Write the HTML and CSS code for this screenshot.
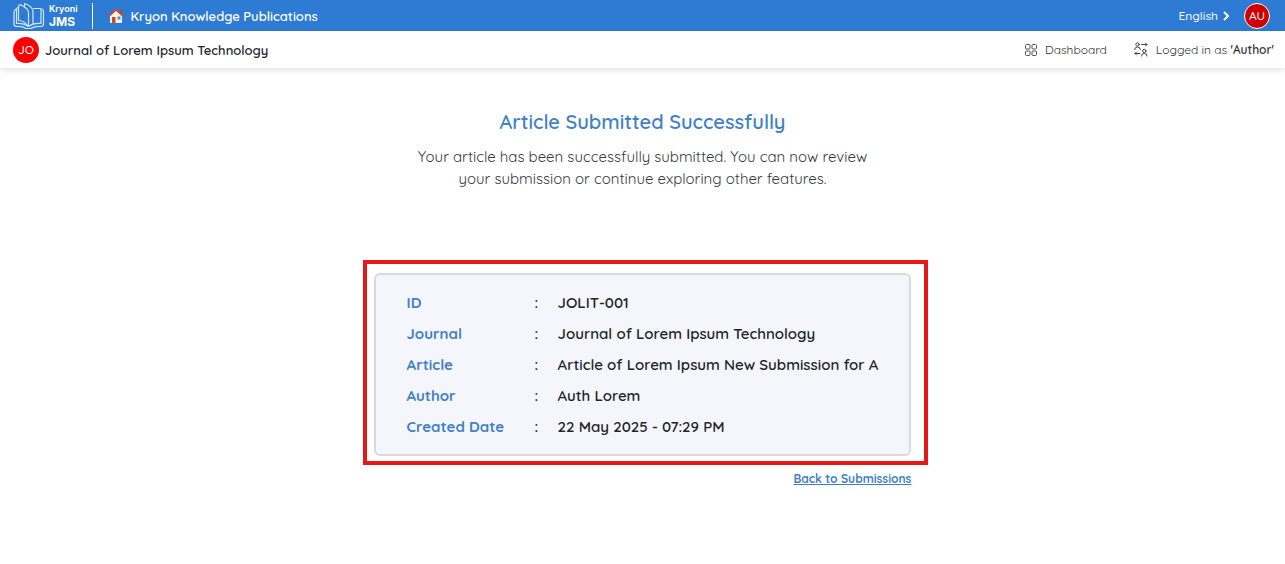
FILE: index.html
```html
<!DOCTYPE html>
<html lang="en">
<head>
<meta charset="utf-8">
<meta name="viewport" content="width=device-width, initial-scale=1">
<title>Article Submitted Successfully</title>
<link rel="stylesheet" href="styles.css">
</head>
<body>
<header>
  <div class="topbar">
    <a class="logo" href="#">
      <svg class="logo-mark" viewBox="0 0 32 28" fill="none" stroke="#d5e5f8" stroke-width="1.2" stroke-linejoin="round" stroke-linecap="round" aria-hidden="true">
        <path d="M3 7Q1 8 1 11V22.500Q1 24.500 4 24.500Q9 24 13 26.500H18Q22 24 27.500 24.500Q30.500 24.500 30.500 22V10Q30.500 7.500 29 7"/>
        <path d="M5.500 5Q3.500 5.500 3.500 8V21.500Q10 20.500 15.500 24.500Q21 20.500 28 21.500V6.500H20.500"/>
        <path d="M7 2.500Q5.500 3 5.500 5V18.500Q11 18.500 15.500 24.500V10.500Q15 7 11.500 5Z"/>
        <path d="M11.500 5V1.500Q19 4 20 9V21.500"/>
      </svg>
      <span class="logo-text"><span class="logo-name">Kryoni</span><span class="logo-product">JMS</span></span>
    </a>
    <a class="publisher" href="#">
      <svg class="home" viewBox="0 0 16 16" aria-hidden="true">
        <path d="M11.500 1.500H13.500V6H11.500Z" fill="#c43e1c"/>
        <path d="M2 8 8 2.500 14 8V15H2Z" fill="#f5f5f5"/>
        <path d="M4 9H7.500V15H4Z" fill="#d9480f"/>
        <path d="M9.500 8.500H12.500V11.500H9.500Z" fill="#3a9be8"/>
        <path d="M1 8.200 8 1.800 15 8.200" fill="none" stroke="#dc4a1b" stroke-width="1.6" stroke-linecap="round" stroke-linejoin="round"/>
      </svg>
      Kryon Knowledge Publications
    </a>
    <div class="account">
      <button class="language" type="button">English
        <svg class="chevron" viewBox="0 0 6 10" fill="none" stroke="currentColor" stroke-width="2" aria-hidden="true"><path d="M1 1 5 5 1 9"/></svg>
      </button>
      <button class="avatar avatar-user" type="button">AU</button>
    </div>
  </div>
  <nav class="subbar">
    <a class="journal" href="#"><span class="avatar avatar-journal">JO</span>Journal of Lorem Ipsum Technology</a>
    <div class="links">
      <a class="link" href="#">
        <svg class="icon-grid" viewBox="0 0 12 12" fill="none" stroke="#555" aria-hidden="true">
          <rect x=".5" y=".5" width="4.500" height="4.500" rx="1"/><rect x="7" y=".5" width="4.500" height="4.500" rx="1"/>
          <rect x=".5" y="7" width="4.500" height="4.500" rx="1"/><rect x="7" y="7" width="4.500" height="4.500" rx="1"/>
        </svg>
        Dashboard
      </a>
      <a class="link" href="#">
        <svg class="icon-role" viewBox="0 0 14 15" fill="none" stroke="#444" stroke-linecap="round" stroke-linejoin="round" aria-hidden="true">
          <circle cx="3.500" cy="2.500" r="1.700"/><path d="M.7 7.500Q.7 5 3.500 5T6.300 7.500"/>
          <circle cx="10.300" cy="9" r="1.700"/><path d="M7.500 14Q7.500 11.500 10.300 11.500T13.100 14"/>
          <path d="M7.500 2.500H13M11.500 1 13 2.500 11.500 4M6 11.500H1M2.500 10 1 11.500 2.500 13"/>
        </svg>
        <span>Logged in as <strong>'Author'</strong></span>
      </a>
    </div>
  </nav>
</header>
<main class="content">
  <h1 class="title">Article Submitted Successfully</h1>
  <p class="message">Your article has been successfully submitted. You can now review<br>your submission or continue exploring other features.</p>
  <div class="result">
    <section class="frame">
      <div class="card">
        <table class="details">
          <tr><th scope="row">ID</th><td class="colon">:</td><td>JOLIT-001</td></tr>
          <tr><th scope="row">Journal</th><td class="colon">:</td><td>Journal of Lorem Ipsum Technology</td></tr>
          <tr><th scope="row">Article</th><td class="colon">:</td><td>Article of Lorem Ipsum New Submission for A</td></tr>
          <tr><th scope="row">Author</th><td class="colon">:</td><td>Auth Lorem</td></tr>
          <tr><th scope="row">Created Date</th><td class="colon">:</td><td>22 May 2025 - 07:29 PM</td></tr>
        </table>
      </div>
    </section>
    <a class="back" href="#">Back to Submissions</a>
  </div>
</main>
</body>
</html>
```
FILE: styles.css
```css
* { box-sizing: border-box; }
body {
  margin: 0;
  background: #fff;
  color: #212529;
  font-family: Quicksand, Inter, sans-serif;
  font-size: 15px;
}
a { color: inherit; text-decoration: none; }
button { border: 0; padding: 0; background: none; color: inherit; font: inherit; cursor: pointer; }
svg { display: block; flex: none; }

.topbar {
  display: flex;
  align-items: center;
  height: 31px;
  padding: 0 15px 0 13px;
  background: #2e7bd3;
  color: #fff;
}
.logo { display: flex; align-items: center; gap: 4px; padding-right: 14px; border-right: 1px solid #fff; height: 26px; }
.logo-mark { width: 32px; height: 28px; }
.logo-text { display: flex; flex-direction: column; font-family: Inter, sans-serif; font-weight: 700; }
.logo-name { font-size: 9px; line-height: 11px; font-weight: 600; }
.logo-product { font-size: 12px; line-height: 15px; }
.publisher { display: flex; align-items: center; gap: 7px; margin-left: 15px; font-size: 13px; line-height: 16px; font-weight: 600; }
.home { width: 16px; height: 16px; }
.account { display: flex; align-items: center; gap: 15px; margin-left: auto; }
.language { display: flex; align-items: center; gap: 5px; font-size: 12px; font-weight: 500; }
.chevron { width: 6px; height: 10px; }
.avatar { display: flex; align-items: center; justify-content: center; width: 26px; height: 26px; border-radius: 50%; color: #fff; font-size: 12px; font-weight: 500; }
.avatar-user { background: #d00000; border: 1px solid #fff; }
.avatar-journal { background: #f00; }

.subbar {
  display: flex;
  align-items: center;
  justify-content: space-between;
  height: 37px;
  padding: 0 11px 0 13px;
  background: #fff;
  box-shadow: 0 2px 6px rgba(0, 0, 0, .12);
}
.journal { display: flex; align-items: center; gap: 6px; font-size: 13px; font-weight: 600; }
.links { display: flex; gap: 27px; }
.link { display: flex; align-items: center; gap: 8px; font-size: 12px; color: #333; }
.link strong { font-weight: 600; }
.icon-grid { width: 12px; height: 12px; }
.icon-role { width: 14px; height: 15px; }

.content { display: flex; flex-direction: column; align-items: center; padding: 40px 16px; }
.title { margin: 0; color: #4381c7; font-size: 20px; line-height: 28px; font-weight: 600; }
.message { margin: 10px 0 0; color: #343a40; font-size: 15px; line-height: 22px; text-align: center; }
.result { display: flex; flex-direction: column; align-items: flex-end; margin: 70px 0 0 6px; }
.frame { padding: 9px 13px 5px 7px; border: 4px solid #e51717; }
.card { padding: 12px 31px; background: #f5f6fb; border: 2px solid #d9dae0; border-radius: 6px; }
.details { border-collapse: collapse; }
.details th, .details td { height: 31px; padding: 0; text-align: left; white-space: nowrap; line-height: 20px; font-weight: 600; }
.details th { min-width: 128px; color: #4381c7; font-weight: 700; }
.details .colon { min-width: 23px; }
.back { margin: 5px 17px 0 0; color: #4381c7; font-size: 12px; line-height: 18px; font-weight: 700; text-decoration: underline; }
```
